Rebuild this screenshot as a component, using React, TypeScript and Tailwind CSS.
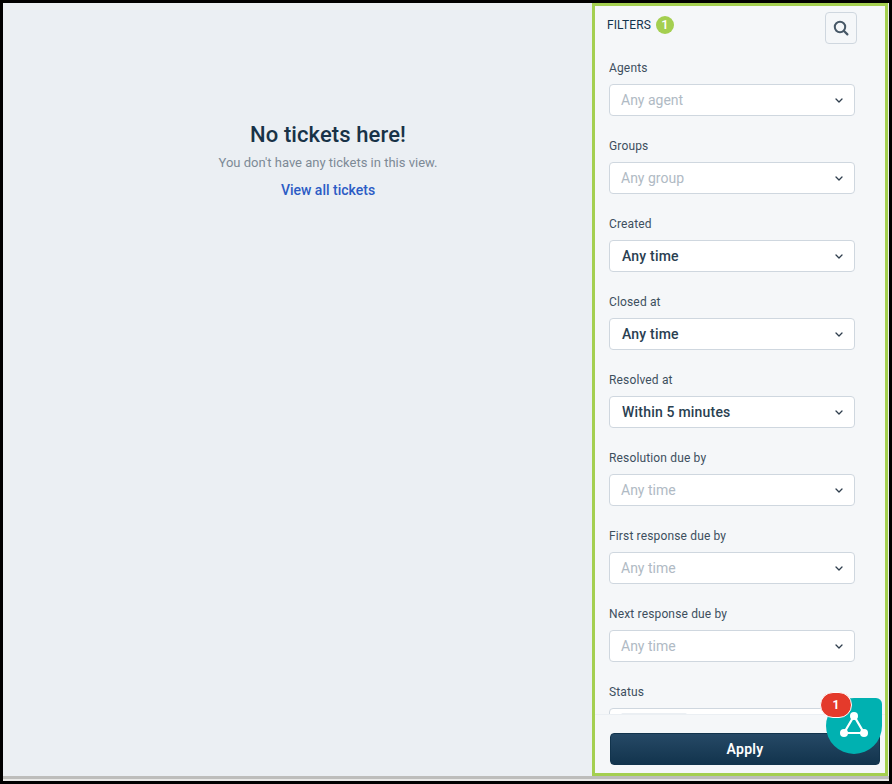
import React from "react";

const FONT = { fontFamily: "Roboto, sans-serif" };

function Chevron() {
  return (
    <svg width="8" height="5" viewBox="0 0 8 5" fill="none" className="shrink-0 mr-[1px]">
      <path d="M1 1 L4 4 L7 1" stroke="#2f3e4d" strokeWidth="1.3" strokeLinecap="round" strokeLinejoin="round" />
    </svg>
  );
}

function Label({ children }: { children: React.ReactNode }) {
  return <div className="h-[17px] pt-[1px] text-[12px] leading-[17px] tracking-[0.15px] text-[#3d4f5e]">{children}</div>;
}

function Field({ label, value, filled }: { label: string; value: string; filled?: boolean }) {
  return (
    <div className="flex flex-col h-[78px]">
      <Label>{label}</Label>
      <div className="mt-[8px] h-[32px] w-[246px] rounded-[4px] border border-[#cfd7df] bg-white flex items-center justify-between pl-[11px] pr-[10px]">
        <span className={filled ? "text-[14px] font-medium tracking-[0.2px] text-[#2a4051] pl-[1px]" : "text-[14px] text-[#b0bac4]"}>{value}</span>
        <Chevron />
      </div>
    </div>
  );
}

export default function App() {
  const fields: [string, string, boolean?][] = [
    ["Agents", "Any agent"],
    ["Groups", "Any group"],
    ["Created", "Any time", true],
    ["Closed at", "Any time", true],
    ["Resolved at", "Within 5 minutes", true],
    ["Resolution due by", "Any time"],
    ["First response due by", "Any time"],
    ["Next response due by", "Any time"],
  ];
  return (
    <div style={FONT} className="relative w-[892px] h-[784px] bg-black pl-[3px] pt-[3px] pr-[3px] pb-[3px] overflow-hidden">
      <div className="h-full flex flex-col bg-[#ebeff3]">
        <div className="flex-1 min-h-0 flex">
          <main className="w-[589px] flex flex-col items-center pt-[117px] pl-[61px] bg-[#ebeff3]">
            <h1 className="text-[22px] leading-[30px] font-medium tracking-[0.1px] text-[#183247]">No tickets here!</h1>
            <p className="mt-[4px] text-[13px] leading-[18px] text-[#7d8a96]">You don't have any tickets in this view.</p>
            <a className="mt-[9px] text-[14px] leading-[18px] font-medium text-[#2c5cc5]">View all tickets</a>
          </main>
          <aside className="w-[296px] h-[773px] border-[3px] border-[#a4cf50] bg-[#f5f7f9] flex flex-col overflow-hidden">
            <div className="h-[53px] shrink-0 relative pl-[12px] pt-[10px]">
              <div className="flex items-center h-[18px]">
                <span className="text-[12px] tracking-[0.1px] text-[#12344d]">FILTERS</span>
                <span className="ml-[5px] w-[18px] h-[18px] rounded-full bg-[#a4cf50] text-white text-[13px] font-medium flex items-center justify-center">1</span>
              </div>
              <button className="absolute left-[230px] top-[6px] w-[32px] h-[32px] rounded-[4px] border border-[#cfd7df] bg-[#f5f7f9] flex items-center justify-center">
                <svg width="16" height="16" viewBox="0 0 16 16" fill="none">
                  <circle cx="7" cy="7" r="5.2" stroke="#475867" strokeWidth="2" />
                  <path d="M11 11 L14.4 14.4" stroke="#475867" strokeWidth="2.2" strokeLinecap="round" />
                </svg>
              </button>
            </div>
            <div className="flex-1 min-h-0 overflow-hidden pl-[14px]">
              {fields.map(([l, v, f]) => (
                <Field key={l} label={l} value={v} filled={f} />
              ))}
              <Label>Status</Label>
              <div className="mt-[8px] h-[32px] w-[246px] rounded-[4px] border border-[#cfd7df] bg-white pl-[11px] pt-[4px]">
                <div className="w-[66px] h-[22px] rounded-[2px] bg-[#ebeff3]" />
              </div>
            </div>
            <div className="h-[59px] shrink-0 border-t border-[#ebeff3] bg-[#f5f7f9] pl-[15px] pr-[4px] pt-[18px]">
              <button className="block w-[270px] h-[32px] rounded-[4px] border border-[#12344d] bg-gradient-to-b from-[#264966] to-[#12344d] text-white text-[14px] font-semibold tracking-[0.3px]">
                Apply
              </button>
            </div>
          </aside>
        </div>
        <div className="h-[5px] shrink-0 border-t-[3px] border-[#bdbdbb] bg-[#e9e9e7]" />
      </div>
      <div className="absolute left-[826px] top-[698px] w-[56px] h-[56px] rounded-tr-[6px] rounded-tl-[28px] rounded-b-[28px] bg-[#00b1b1] flex items-center justify-center">
        <svg width="30" height="28" viewBox="0 0 30 28" className="mt-[2px] overflow-visible">
          <path d="M15 3 L5 20 L25 20 Z" fill="none" stroke="white" strokeWidth="2.2" />
          <circle cx="15" cy="3" r="4" fill="white" />
          <circle cx="5" cy="20" r="4" fill="white" />
          <circle cx="25" cy="20" r="4" fill="white" />
        </svg>
      </div>
      <div className="absolute left-[820px] top-[692px] w-[32px] h-[26px] rounded-full border border-white bg-[#e43a2b] text-white text-[12px] font-bold flex items-center justify-center">1</div>
    </div>
  );
}
